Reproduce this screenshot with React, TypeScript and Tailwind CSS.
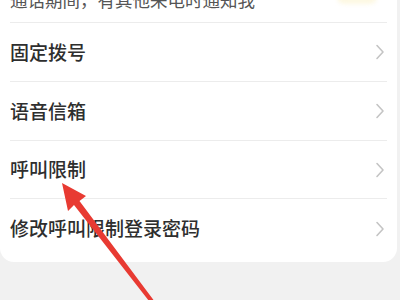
import React from "react";

const rows = ["固定拨号", "语音信箱", "呼叫限制", "修改呼叫限制登录密码"];

const Chevron = () => (
  <svg width="10" height="16" viewBox="0 0 10 16" fill="none" className="shrink-0">
    <path d="M2 1.5 L8 8 L2 14.5" stroke="#c4c4c4" strokeWidth="1.6" strokeLinecap="round" strokeLinejoin="round" />
  </svg>
);

export default function App() {
  return (
    <div
      className="relative w-[400px] h-[300px] overflow-hidden bg-[#f1f1f1]"
      style={{ fontFamily: '"Noto Sans CJK SC", "Noto Sans", sans-serif' }}
    >
      <div className="bg-white rounded-b-[14px] mr-[3px]">
        {/* partially scrolled-off row */}
        <div className="h-[22px] px-[10px] flex items-start justify-between overflow-hidden">
          <span className="text-[17.5px] leading-[20px] -mt-[10px] text-[#555]">
            通话期间，有其他来电时通知我
          </span>
          <div className="w-[40px] h-[14px] -mt-[10px] mr-[10px] rounded-full bg-[#fdf8e2] blur-[2px]" />
        </div>
        {rows.map((r, i) => (
          <div key={r} className="px-[10px]">
            <div className="h-px bg-[#ececec]" />
            <div
              className={`flex items-center justify-between pr-[2px] ${
                i === 3 ? "h-[63px] pb-[4px]" : i === 2 ? "h-[57px]" : "h-[58px]"
              }`}
            >
              <span className="text-[19px] font-medium text-[#2e2e2e]">{r}</span>
              <Chevron />
            </div>
          </div>
        ))}
      </div>

      {/* red annotation arrow */}
      <svg className="absolute left-0 top-0" width="400" height="300" viewBox="0 0 400 300">
        <polygon
          points="62,183 86,196 79.5,201 153.5,300 149,301 74,205 68,211"
          fill="#e83a32"
        />
      </svg>
    </div>
  );
}
